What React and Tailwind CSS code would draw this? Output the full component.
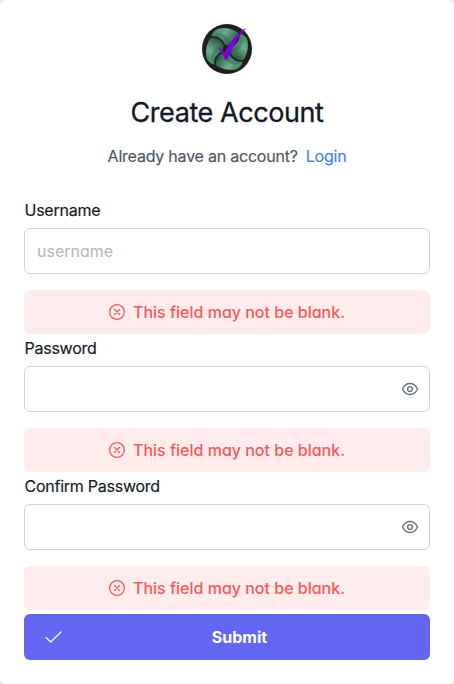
const fieldFont = "font-['Inter',sans-serif] [font-feature-settings:'cv11']";

function Logo() {
  return (
    <svg width="50" height="50" viewBox="-25 -25 50 50" aria-label="logo">
      <defs>
        <linearGradient id="leaf" x1="0" y1="0" x2="1" y2="0.6">
          <stop offset="0" stopColor="#3a7a5c" />
          <stop offset="0.5" stopColor="#6aad8a" />
          <stop offset="1" stopColor="#22533f" />
        </linearGradient>
      </defs>
      <circle r="25" fill="#211d1d" />
      <g transform="rotate(-8)">
        {[0, 90, 180, 270].map((angle) => (
          <g key={angle} transform={`rotate(${angle})`}>
            <path
              d="M-14 -14C-12 -19.500 -8 -22 -3 -21.500C4 -21 10 -18 14 -14C14 -8 10 -3.500 4 -2C3 -4 0 -5 -2 -4C-3.500 -10 -8 -14 -14 -14Z"
              fill="url(#leaf)"
            />
            <path d="M-7 -17C1 -16 5 -9 4 -2C3 -4 0 -5 -2 -4C-3.500 -10 -8 -14 -14 -14Z" fill="#174333" fillOpacity="0.3" />
          </g>
        ))}
        {[0, 90, 180, 270].map((angle) => (
          <path key={angle} transform={`rotate(${angle})`} d="M-15 -14C-8 -14 -3.500 -10 -2 -4" fill="none" stroke="#1c211f" strokeWidth="1.6" strokeLinecap="round" />
        ))}
      </g>
      <path d="M-10 -1.500C-7 -1 -4.500 .5 -2.600 3.500C2 -6 10 -16 19.500 -21.500C11 -12 5 -1 .2 10.500L-1.800 11C-4 5 -6 1 -10 -1.500Z" fill="#7d00dc" />
    </svg>
  );
}

function ErrorMessage() {
  return (
    <div className={`mt-4 flex h-11 items-center justify-center rounded-md bg-[#ffeded] text-[#ff5757] ${fieldFont}`}>
      <svg width="16" height="16" viewBox="0 0 16 16" fill="none" stroke="currentColor" strokeWidth="1.3" strokeLinecap="round">
        <circle cx="8" cy="8" r="7.35" />
        <path d="M5.500 5.500L10.500 10.500M10.500 5.500L5.500 10.500" />
      </svg>
      <span className="ml-2 text-base font-medium">This field may not be blank.</span>
    </div>
  );
}

function Field({ label, placeholder, secret }) {
  return (
    <div className="mb-1">
      <label className="block h-5 pl-[0.5px] text-base leading-5 tracking-[-0.25px] [-webkit-text-stroke:0.15px]">{label}</label>
      <div className="mt-2 flex h-[46px] items-center rounded-md border border-[#d1d5db] bg-white px-3">
        <input placeholder={placeholder} type={secret ? "password" : "text"} className={`min-w-0 flex-1 bg-transparent text-base outline-none placeholder:text-[#b3b6bf] ${fieldFont}`} />
        {secret && (
          <svg className="-mr-0.5" width="18" height="16" viewBox="0 0 18 16" fill="none" stroke="#6b7280" strokeWidth="1.4">
            <path d="M1.500 8C3.200 4.400 5.700 2.500 9 2.500S14.800 4.400 16.500 8C14.800 11.600 12.300 13.500 9 13.500S3.200 11.600 1.500 8Z" />
            <circle cx="9" cy="8" r="2.400" />
          </svg>
        )}
      </div>
      <ErrorMessage />
    </div>
  );
}

export default function App() {
  return (
    <div className="h-[684px] w-[454px] bg-[#e9e9e9]">
      <main className="flex h-full flex-col rounded-md bg-white p-6 font-['Inter',sans-serif] text-[#111827]">
        <header className="flex flex-col items-center">
          <Logo />
          <h1 className="mt-[21px] text-[27px] leading-9 tracking-[-0.42px] [-webkit-text-stroke:0.3px]">Create Account</h1>
          <p className="mt-[13px] text-base leading-6 tracking-[-0.22px] text-[#4b5563] [-webkit-text-stroke:0.15px]">
            Already have an account?<a className="ml-2 text-[#3b82f6]">Login</a>
          </p>
        </header>
        <form className="mt-8">
          <Field label="Username" placeholder="username" />
          <Field label="Password" secret />
          <Field label="Confirm Password" secret />
          <button type="button" className="flex h-[46px] w-full items-center rounded-md bg-[#6366f1] pr-[13px] pl-5 text-base font-bold text-white">
            <svg width="18" height="18" viewBox="0 0 18 18" fill="none" stroke="currentColor" strokeWidth="1.2" strokeLinecap="round" strokeLinejoin="round">
              <path d="M2 9.500L6.800 14L17 4" />
            </svg>
            <span className="flex-1">Submit</span>
          </button>
        </form>
      </main>
    </div>
  );
}
